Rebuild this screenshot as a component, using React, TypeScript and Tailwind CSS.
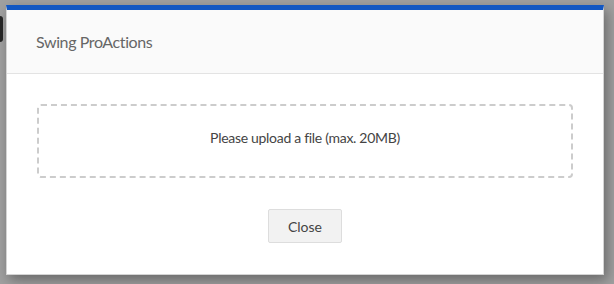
import React from "react";

export default function App() {
  return (
    <div className="relative w-[614px] h-[284px] overflow-hidden bg-[#a0a0a0] pt-[5px] pl-[6px]" style={{ fontFamily: "Lato, 'Noto Sans', sans-serif" }}>
      <div className="absolute left-[-6px] top-[16px] w-[9px] h-[26px] rounded-[3px] bg-[#262626]" />
      <div className="relative w-[598px] h-[270px] bg-white border border-[#d4d4d4] border-t-[5px] border-t-[#1257c2] shadow-[3px_5px_12px_rgba(0,0,0,0.35)] flex flex-col">
        <div className="h-[64px] bg-[#fafafa] border-b border-[#e3e3e3] flex items-center pl-[29px]">
          <span className="text-[16px] tracking-[-0.4px] text-[#666666]">Swing ProActions</span>
        </div>
        <div className="px-[30px] pt-[30px]">
          <div className="h-[74px] border-2 border-dashed border-[#cccccc] rounded-[4px] flex items-center justify-center pb-[8px]">
            <span className="text-[14px] tracking-[-0.3px] text-[#444444]">Please upload a file (max. 20MB)</span>
          </div>
        </div>
        <div className="flex justify-center pt-[31px]">
          <button className="w-[74px] h-[34px] bg-[#f2f2f2] border border-[#dddddd] rounded-[2px] text-[14px] text-[#444444]">Close</button>
        </div>
      </div>
    </div>
  );
}
